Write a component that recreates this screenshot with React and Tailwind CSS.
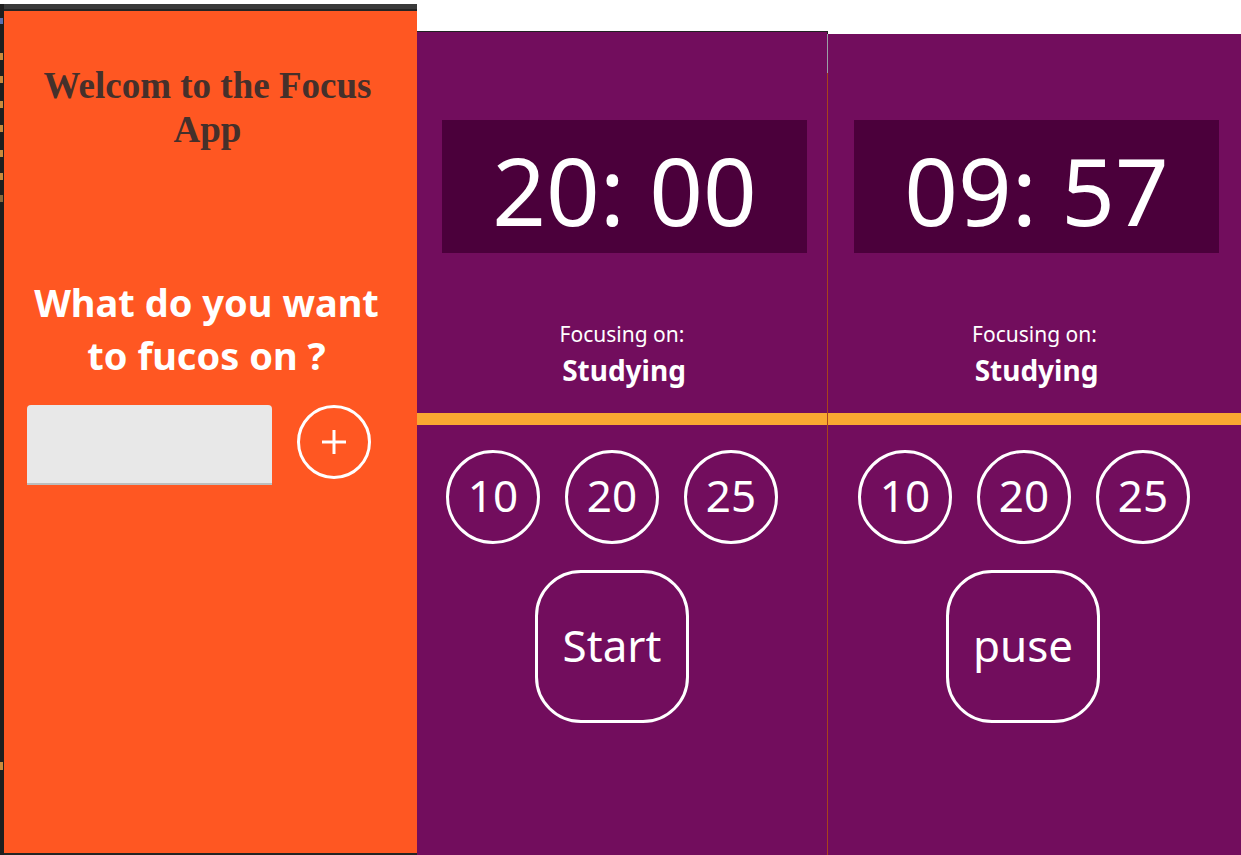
import React from "react";

const sans = { fontFamily: '"Noto Sans", "Open Sans", sans-serif' };

function Circle({ label }) {
  return (
    <div className="w-[94px] h-[94px] rounded-full border-[3px] border-white flex items-center justify-center text-white text-[44px] leading-none pb-[4px]">
      {label}
    </div>
  );
}

function TimerPanel({ time, action, topGap, boxMt, boxMl, boxMr, firstCircle }) {
  return (
    <div className="w-full flex flex-col h-full">
      <div className="bg-white" style={{ height: topGap }} />
      <div className="flex-1 bg-[#720d5d] flex flex-col">
        <div
          className="h-[133px] bg-[#4b003b] flex items-center justify-center pt-[7px]"
          style={{ marginTop: boxMt, marginLeft: boxMl, marginRight: boxMr }}
        >
          <span className="text-white text-[94px] leading-none">{time}</span>
        </div>
        <div className="h-[160px] pt-[67px] flex flex-col items-center text-white">
          <div className="text-[21px] leading-[28px]">Focusing on:</div>
          <div className="text-[28px] leading-[36px] font-bold mt-[4px] ml-[4px]">Studying</div>
        </div>
        <div className="h-[12px] bg-[#f9a831]" />
        <div className="flex gap-[25px] pt-[25px]" style={{ paddingLeft: firstCircle }}>
          <Circle label="10" />
          <Circle label="20" />
          <Circle label="25" />
        </div>
        <div className="pl-[118px] pt-[26px]">
          <div className="w-[154px] h-[153px] rounded-[46px] border-[3px] border-white flex items-center justify-center text-white text-[44px] leading-none pb-[4px]">
            {action}
          </div>
        </div>
      </div>
    </div>
  );
}

export default function App() {
  return (
    <div className="w-[1241px] h-[855px] flex bg-white overflow-hidden" style={sans}>
      {/* editor strip */}
      <div className="w-[4px] h-full flex flex-col">
        <div className="h-[4px] bg-white" />
        <div className="flex-1 bg-[#1e1e1e] flex flex-col">
          <div className="h-[14px]" />
          <div className="h-[6px] w-[3px] bg-[#5a6fb0]" />
          <div className="h-[29px]" />
          <div className="h-[7px] w-[3px] bg-[#c98a3c]" />
          <div className="h-[16px]" />
          <div className="h-[7px] w-[3px] bg-[#c98a3c]" />
          <div className="h-[18px]" />
          <div className="h-[7px] w-[3px] bg-[#c98a3c]" />
          <div className="h-[17px]" />
          <div className="h-[7px] w-[3px] bg-[#c98a3c]" />
          <div className="h-[18px]" />
          <div className="h-[7px] w-[3px] bg-[#c98a3c]" />
          <div className="h-[16px]" />
          <div className="h-[7px] w-[3px] bg-[#c98a3c]" />
          <div className="h-[15px]" />
          <div className="h-[7px] w-[3px] bg-[#8a6a3c]" />
          <div className="h-[560px]" />
          <div className="h-[8px] w-[3px] bg-[#c98a3c]" />
        </div>
      </div>

      {/* left panel */}
      <div className="w-[413px] h-full flex flex-col">
        <div className="h-[4px] bg-white" />
        <div className="h-[5px] bg-[#3a3a3a]" />
        <div className="h-[2px] bg-[#242424]" />
        <div className="flex-1 bg-[#ff5722] flex flex-col">
          <h1
            className="pt-[53px] pl-[16px] pr-[22px] text-center text-[37px] leading-[44px] font-bold text-[#45302b]"
            style={{ fontFamily: '"Liberation Serif", "Times New Roman", serif' }}
          >
            Welcom to the Focus App
          </h1>
          <div className="mt-[124px] pl-[15px] pr-[23px] text-center text-white font-bold text-[38px] leading-[53px]">
            What do you want to fucos on ?
          </div>
          <div className="mt-[23px] flex items-start pl-[23px] gap-[25px]">
            <div className="w-[245px] h-[80px] bg-[#e8e8e8] rounded-t-[4px] border-b-2 border-[#bdbdbd]" />
            <div className="w-[74px] h-[74px] rounded-full border-[3px] border-white flex items-center justify-center">
              <svg width="26" height="26" viewBox="0 0 26 26">
                <line x1="13" y1="1" x2="13" y2="25" stroke="white" strokeWidth="3" />
                <line x1="1" y1="13" x2="25" y2="13" stroke="white" strokeWidth="3" />
              </svg>
            </div>
          </div>
        </div>
        <div className="h-[2px] bg-[#242424]" />
      </div>

      {/* middle panel */}
      <div className="w-[410px] h-full flex flex-col">
        <div className="h-[31px] bg-white" />
        <div className="h-[1px] bg-[#222]" />
        <div className="flex-1">
          <TimerPanel time="20: 00" action="Start" topGap={0} boxMt="88px" boxMl="25px" boxMr="20px" firstCircle="29px" />
        </div>
      </div>

      {/* separator */}
      <div className="w-[1px] h-full flex flex-col">
        <div className="h-[31px] bg-white" />
        <div className="h-[3px] bg-[#222]" />
        <div className="h-[39px] bg-[#9aa0a6]" />
        <div className="flex-1 bg-[#a8421c]" />
      </div>

      {/* right panel */}
      <div className="w-[413px] h-full flex flex-col">
        <TimerPanel time="09: 57" action="puse" topGap="34px" boxMt="86px" boxMl="26px" boxMr="22px" firstCircle="30px" />
      </div>
    </div>
  );
}
